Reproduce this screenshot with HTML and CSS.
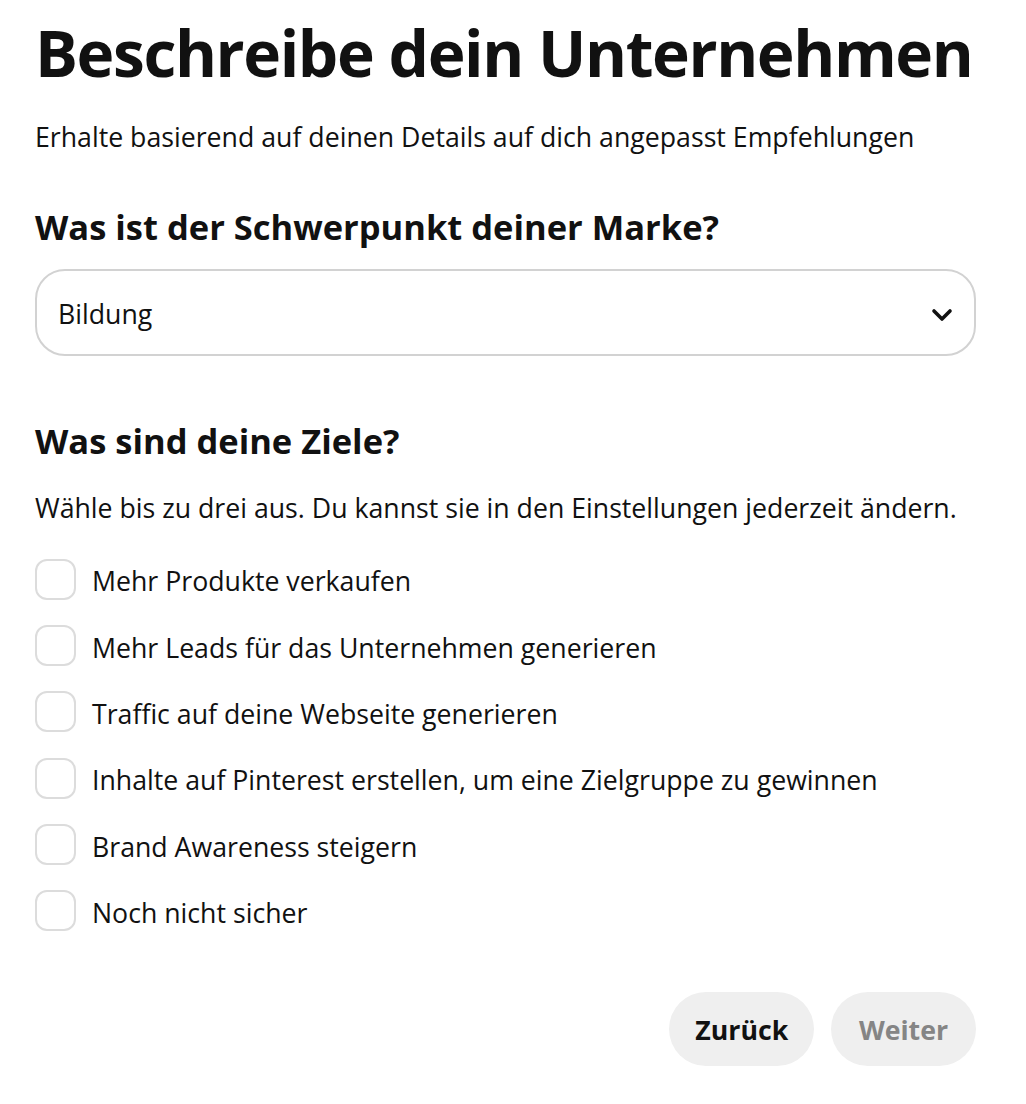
FILE: index.html
```html
<!DOCTYPE html>
<html lang="de">
<head>
<meta charset="utf-8">
<title>Beschreibe dein Unternehmen</title>
<link rel="stylesheet" href="styles.css">
</head>
<body>
<main class="page">
  <h1 class="title">Beschreibe dein Unternehmen</h1>
  <p class="subtitle">Erhalte basierend auf deinen Details auf dich angepasst Empfehlungen</p>

  <h2 class="question q-focus">Was ist der Schwerpunkt deiner Marke?</h2>
  <div class="select">
    <span class="select-value">Bildung</span>
    <svg class="chevron" viewBox="0 0 22 16" width="22" height="16" aria-hidden="true">
      <path d="M3 4L11 12L19 4" fill="none" stroke="#111" stroke-width="3.6" stroke-linecap="round" stroke-linejoin="round"/>
    </svg>
  </div>

  <h2 class="question q-goals">Was sind deine Ziele?</h2>
  <p class="hint">Wähle bis zu drei aus. Du kannst sie in den Einstellungen jederzeit ändern.</p>

  <ul class="options">
    <li class="option"><span class="box"></span><span class="label">Mehr Produkte verkaufen</span></li>
    <li class="option"><span class="box"></span><span class="label">Mehr Leads für das Unternehmen generieren</span></li>
    <li class="option"><span class="box"></span><span class="label">Traffic auf deine Webseite generieren</span></li>
    <li class="option"><span class="box"></span><span class="label">Inhalte auf Pinterest erstellen, um eine Zielgruppe zu gewinnen</span></li>
    <li class="option"><span class="box"></span><span class="label">Brand Awareness steigern</span></li>
    <li class="option"><span class="box"></span><span class="label">Noch nicht sicher</span></li>
  </ul>

  <div class="actions">
    <button class="btn btn-back">Zurück</button>
    <button class="btn btn-next">Weiter</button>
  </div>
</main>
</body>
</html>
```

FILE: styles.css
```css
* { box-sizing: border-box; }

html, body {
  margin: 0;
  padding: 0;
  background: #fff;
}

body {
  font-family: "Open Sans", "Noto Sans", sans-serif;
  color: #111;
}

.page {
  width: 976px;
  padding: 0 0 0 35px;
}

.title {
  margin: 0;
  padding-top: 13.2px;
  font-size: 64px;
  line-height: 80px;
  font-weight: 700;
  letter-spacing: -1.4px;
  white-space: nowrap;
  color: #111;
}

.subtitle {
  margin: 25.4px 0 0 0;
  font-size: 26.7px;
  line-height: 36px;
  color: #111;
}

.question {
  margin: 0;
  font-weight: 700;
  color: #111;
  font-size: 34.5px;
  line-height: 44px;
}

.q-focus { margin-top: 50px; }

.select {
  margin-top: 20.7px;
  height: 87px;
  border: 2px solid #d2d2d2;
  border-radius: 30px;
  display: flex;
  align-items: center;
  justify-content: space-between;
  padding: 0 21px 0 21px;
}

.select-value {
  font-size: 26.7px;
  line-height: 36px;
  color: #111;
  padding-top: 2px;
}

.chevron {
  width: 22px;
  height: 16px;
  margin-top: 4px;
}

.q-goals { margin-top: 62.3px; }

.hint {
  margin: 27px 0 0 0;
  font-size: 26.7px;
  line-height: 36px;
  color: #111;
}

.options {
  list-style: none;
  margin: 20.7px 0 0 0;
  padding: 0;
}

.option {
  display: flex;
  align-items: center;
  height: 66.3px;
}

.box {
  flex: none;
  width: 41px;
  height: 41px;
  border: 2px solid #dcdcdc;
  border-radius: 12px;
  margin-right: 16px;
}

.label {
  font-size: 26.7px;
  line-height: 36px;
  padding-top: 4px;
  color: #111;
}

.actions {
  display: flex;
  justify-content: flex-end;
  gap: 16.7px;
  margin-top: 47.5px;
}

.btn {
  height: 74.3px;
  width: 145px;
  border: none;
  border-radius: 37px;
  background: #efefef;
  font-family: inherit;
  font-size: 26.7px;
  line-height: 36px;
  font-weight: 700;
  color: #111;
  padding: 2px 0 0 0;
  cursor: pointer;
}

.btn-next { color: #858585; }
```
